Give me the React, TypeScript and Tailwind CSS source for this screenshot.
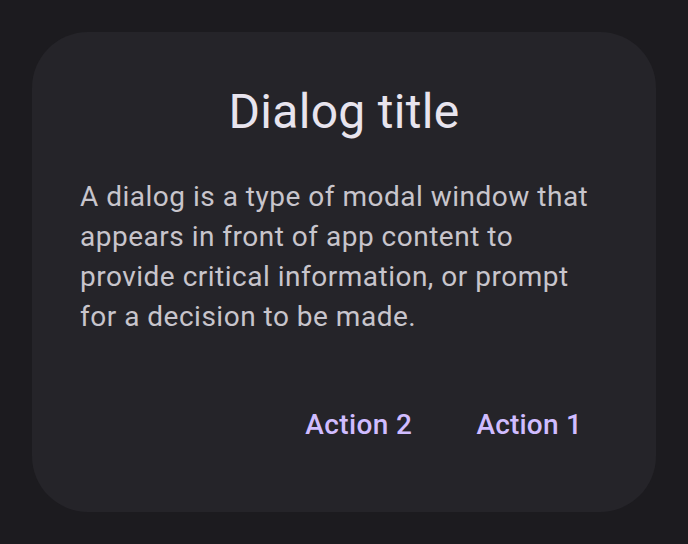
export default function App() {
  return (
    <div className="w-[688px] h-[544px] bg-[#1c1b1f] p-8" style={{ fontFamily: 'Roboto, "Noto Sans", sans-serif' }}>
      <div className="w-[624px] h-[480px] bg-[#252429] rounded-[56px] p-12 flex flex-col">
        <h1 className="text-[48px] leading-[64px] tracking-[0.3px] text-[#e8e4ee] text-center font-normal">Dialog title</h1>
        <p className="mt-[33px] text-[28px] leading-[40px] tracking-[0.5px] text-[#c8c5cc]">
          A dialog is a type of modal window that appears in front of app content to provide critical information, or prompt for a decision to be made.
        </p>
        <div className="mt-12 flex justify-end gap-4 pr-[2px]">
          <button className="h-20 px-6 text-[28px] leading-[40px] font-medium tracking-[0.4px] text-[#d0bcff]">Action 2</button>
          <button className="h-20 px-6 text-[28px] leading-[40px] font-medium tracking-[0.2px] text-[#d0bcff]">Action 1</button>
        </div>
      </div>
    </div>
  );
}
